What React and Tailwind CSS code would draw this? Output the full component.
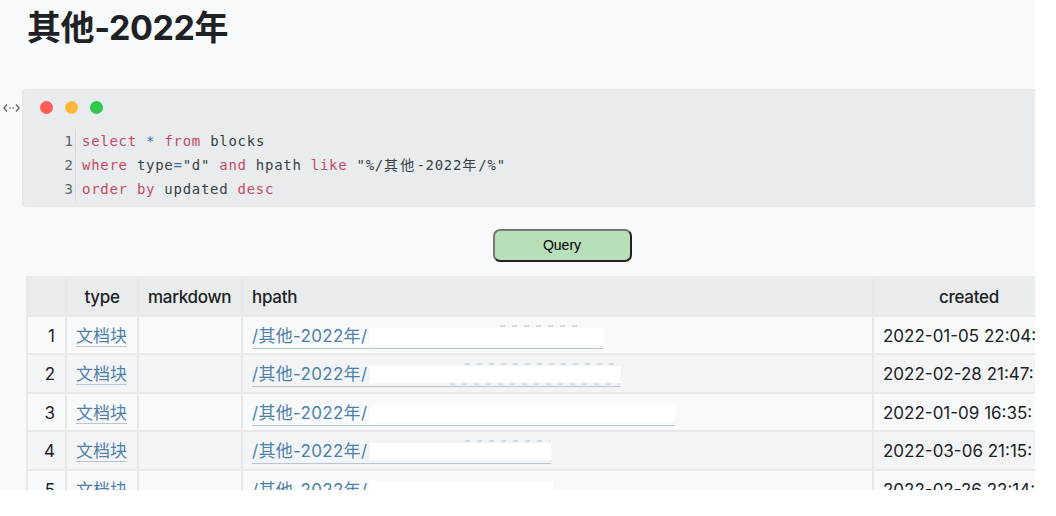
import React from 'react';

const sans = 'font-["Inter","Noto_Sans_CJK_SC",sans-serif]';

// cut = width of the white patch over the path, top/bottom = bits of text peeking out around it
const rows = [
  { n: 1, h: 'h-[38px]', cut: 233, top: [130, 82], date: '2022-01-05 22:04:' },
  { n: 2, h: 'h-[39px]', cut: 251, top: [95, 155], bottom: [80, 170], date: '2022-02-28 21:47:' },
  { n: 3, h: 'h-[38px]', cut: 305, date: '2022-01-09 16:35:' },
  { n: 4, h: 'h-[39px]', cut: 181, top: [95, 85], date: '2022-03-06 21:15:' },
  { n: 5, h: 'h-[39px]', cut: 183, date: '2022-02-26 22:14:' },
];

const Kw = ({ children }) => <span className="text-[#c94a5e]">{children}</span>;
const Cjk = ({ children }) => <span className="tracking-[2.2px]">{children}</span>;

const Crumbs = ({ at, className }) => (
  <span
    className={`absolute h-[2px] bg-[repeating-linear-gradient(90deg,#d3dde5_0_5px,transparent_5px_12px)] ${className}`}
    style={{ left: at[0], width: at[1] }}
  />
);

const CodeBlock = () => (
  <div className="relative ml-[22px] mt-[31px] h-[118px] rounded-l-[4px] bg-[#e8ecee] border border-[#e3e6e9] border-r-0">
    <svg className="absolute left-[-20px] top-[12px] w-[17px] h-[12px] text-[#5f6368]" viewBox="0 0 17 12" fill="none" stroke="currentColor" strokeWidth="1.3">
      <path d="M4 2.5 1 6l3 3.5M13 2.5 16 6l-3 3.5" />
      <path d="M6.5 6h1.2M9.5 6h1.2" />
    </svg>
    <div className="flex gap-3 pl-[17px] pt-[11px]">
      <span className="w-[13px] h-[13px] rounded-full bg-[#ff5f56]" />
      <span className="w-[13px] h-[13px] rounded-full bg-[#fdb73b]" />
      <span className="w-[13px] h-[13px] rounded-full bg-[#2fc94a]" />
    </div>
    <div className="flex mt-[15px] text-[14px] leading-[24px] tracking-[0.72px] font-['DejaVu_Sans_Mono','Noto_Sans_CJK_SC',monospace]">
      <div className="w-[53px] pr-[2px] text-right text-[#5f6368] border-r border-[#d5d8db] h-[72px] tracking-normal">
        <div>1</div>
        <div>2</div>
        <div>3</div>
      </div>
      <div className="pl-[6px] text-[#3a3f44] whitespace-pre">
        <div><Kw>select</Kw> <span className="text-[#3a6ea5]">*</span> <Kw>from</Kw> blocks</div>
        <div><Kw>where</Kw> type<span className="text-[#3a6ea5]">=</span>"d" <Kw>and</Kw> hpath <Kw>like</Kw> "%/<Cjk>其他</Cjk>-2022<Cjk>年</Cjk>/%"</div>
        <div><Kw>order</Kw> <Kw>by</Kw> updated <Kw>desc</Kw></div>
      </div>
    </div>
  </div>
);

const ResultTable = () => (
  <table className="ml-[26px] mt-[14px] table-fixed border-collapse w-[1100px] text-[17px] text-[#202124]">
    <colgroup>
      <col className="w-[39px]" />
      <col className="w-[72px]" />
      <col className="w-[104px]" />
      <col className="w-[631px]" />
      <col className="w-[254px]" />
    </colgroup>
    <thead>
      <tr className="h-[39px] bg-[#e9eced]">
        {['', 'type', 'markdown', 'hpath'].map((h, i) => (
          <th key={i} className={`border-2 border-t border-[#e6e8eb] px-[9px] pt-[3px] font-medium tracking-[-0.3px] ${i === 1 ? 'text-center' : 'text-left'}`}>{h}</th>
        ))}
        <th className="border-2 border-t border-[#e6e8eb] pt-[3px] font-medium tracking-[-0.3px] text-center pr-[62px]">created</th>
      </tr>
    </thead>
    <tbody>
      {rows.map((r) => (
        <tr key={r.n} className={`${r.h} ${r.n % 2 === 0 ? 'bg-[#f2f4f6]' : 'bg-[#f8f9fb]'}`}>
          <td className="border-2 border-[#e6e8eb] pr-[10px] pt-[4px] text-right">{r.n}</td>
          <td className="border-2 border-[#e6e8eb] px-[9px] pt-[4px]">
            <span className="text-[#4f81a8] border-b border-[#b9c6d1]">文档块</span>
          </td>
          <td className="border-2 border-[#e6e8eb]" />
          <td className="border-2 border-[#e6e8eb] px-[9px] pt-[4px] whitespace-nowrap">
            <span className="inline-flex items-center text-[#4f81a8] border-b border-[#b9c6d1] leading-[23px] tracking-[0.3px]">
              /其他-2022年/
              <span className="relative inline-block ml-[3px] h-[17px] bg-white" style={{ width: r.cut }}>
                {r.top && <Crumbs at={r.top} className="top-[-3px]" />}
                {r.bottom && <Crumbs at={r.bottom} className="bottom-[-2px]" />}
              </span>
            </span>
          </td>
          <td className="border-2 border-[#e6e8eb] pl-[9px] pt-[4px] whitespace-nowrap overflow-hidden">{r.date}</td>
        </tr>
      ))}
    </tbody>
  </table>
);

export default function App() {
  return (
    <div className={`h-[516px] w-[1056px] overflow-hidden bg-white ${sans}`}>
      <div className="h-[490px] w-[1035px] overflow-hidden bg-[#f8f9fb]">
        <h1 className="pl-[27px] pt-[6px] h-[58px] text-[34px] leading-[44px] font-bold tracking-[-0.4px] text-[#202124]">其他-2022年</h1>
        <CodeBlock />
        <div className="flex justify-center mt-[22px] pl-[89px]">
          <button className="w-[139px] h-[33px] rounded-[7px] bg-[#b7dfb9] border-2 border-t-[#777] border-l-[#777] border-r-[#222] border-b-[#222] text-[14px] text-black font-['Liberation_Sans',sans-serif]">
            Query
          </button>
        </div>
        <ResultTable />
      </div>
    </div>
  );
}
